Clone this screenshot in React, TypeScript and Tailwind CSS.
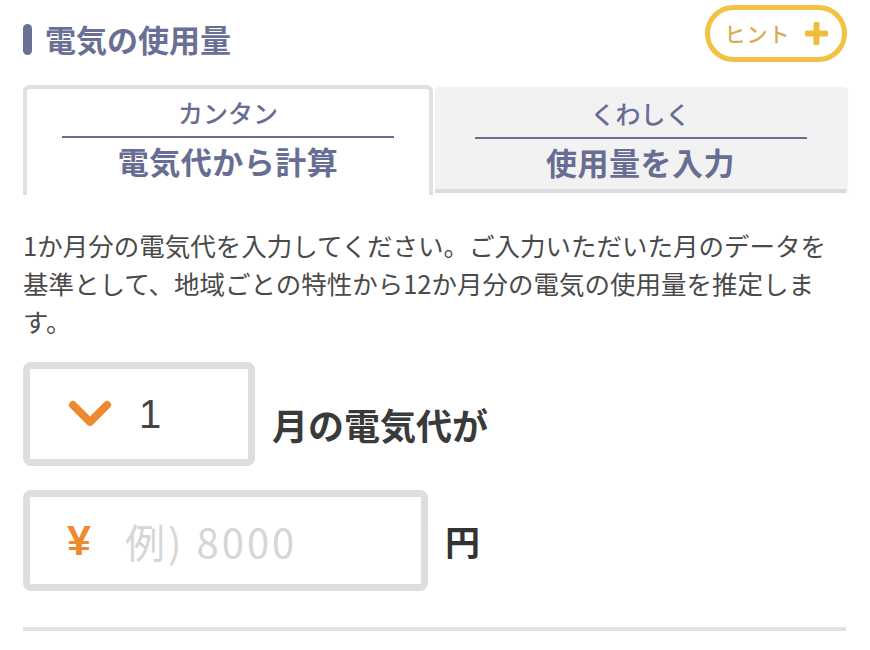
import { useState } from "react";

const jp = { fontFamily: "'Noto Sans CJK JP', 'Noto Sans', sans-serif" };

function Tab({
  label,
  title,
  active,
  onClick,
}: {
  label: string;
  title: string;
  active: boolean;
  onClick: () => void;
}) {
  return (
    <button
      onClick={onClick}
      className={
        active
          ? "w-[410px] shrink-0 h-[110px] bg-white border-[4px] border-b-0 border-[#e0e0e0] rounded-t-[6px] pt-[6px] flex flex-col items-center"
          : "flex-1 mt-[2px] h-[106px] bg-[#f2f2f2] border-b-[4px] border-[#dcdcdc] rounded-t-[4px] pt-[9px] flex flex-col items-center shadow-[2px_0_2px_rgba(0,0,0,0.06)]"
      }
    >
      <span className="text-[25px] leading-[34px] font-medium text-[#676d93]">
        {label}
      </span>
      <span className="mt-[7px] block h-[2px] w-[332px] bg-[#676d93]" />
      <span className="mt-[3px] text-[31px] leading-[40px] font-bold text-[#676d93] tracking-[0.5px]">
        {title}
      </span>
    </button>
  );
}

export default function App() {
  const [tab, setTab] = useState(0);

  return (
    <main className="w-[870px] h-[650px] bg-white pl-[23px] pr-[24px] overflow-hidden" style={jp}>
      {/* Header */}
      <div className="flex justify-between items-start pt-[5px]">
        <div className="mt-[14px] h-[40px] flex items-center gap-[13px]">
          <span className="block w-[9px] h-[31px] rounded-full bg-[#6a6f95]" />
          <h2 className="text-[31px] leading-[40px] font-bold text-[#6a6f95]">電気の使用量</h2>
        </div>
        <button className="w-[142px] h-[57px] rounded-full border-[5px] border-[#f1c244] flex items-center justify-center gap-[14px] mr-[-1px]">
          <span className="text-[21px] leading-none font-medium text-[#d8ad4f] tracking-[1px]">ヒント</span>
          <svg width="23" height="23" viewBox="0 0 23 23">
            <rect x="8.5" y="0" width="6" height="23" rx="1.5" fill="#efbd38" />
            <rect x="0" y="8.5" width="23" height="6" rx="1.5" fill="#efbd38" />
          </svg>
        </button>
      </div>

      {/* Tabs */}
      <div className="mt-[23px] flex gap-[2px]">
        <Tab label="カンタン" title="電気代から計算" active={tab === 0} onClick={() => setTab(0)} />
        <Tab label="くわしく" title="使用量を入力" active={tab === 1} onClick={() => setTab(1)} />
      </div>

      {/* Description */}
      <p className="mt-[31px] text-[25.5px] leading-[38px] text-[#4a4a4a]">
        1か月分の電気代を入力してください。ご入力いただいた月のデータを基準として、地域ごとの特性から12か月分の電気の使用量を推定します。
      </p>

      {/* Month select */}
      <div className="mt-[22px] flex items-end gap-[17px]">
        <div className="w-[232px] h-[104px] border-[7px] border-[#dedede] rounded-[8px] flex items-center pl-[38px] gap-[27px]">
          <svg width="44" height="28" viewBox="0 0 44 28">
            <path d="M5 5 L22 22 L39 5" fill="none" stroke="#ee8a2e" strokeWidth="8" strokeLinecap="round" strokeLinejoin="round" />
          </svg>
          <span className="text-[40px] leading-none font-medium text-[#444]" style={{ fontFamily: "'Liberation Sans', sans-serif" }}>1</span>
        </div>
        <span className="pb-[20px] text-[36px] leading-[44px] font-bold text-[#3a3a3a]">月の電気代が</span>
      </div>

      {/* Amount input */}
      <div className="mt-[24px] flex items-center gap-[17px]">
        <div className="w-[405px] h-[101px] border-[7px] border-[#dedede] rounded-[8px] flex items-center pl-[37px]">
          <span className="text-[43px] leading-none font-bold text-[#ee8a2e] w-[27px]" style={{ fontFamily: "'Liberation Sans', sans-serif" }}>¥</span>
          <input
            type="text"
            placeholder="例) 8000"
            className="ml-[31px] w-[250px] bg-transparent outline-none text-[40px] tracking-[3px] text-[#444] placeholder:text-[#d6d6d6]"
          />
        </div>
        <span className="text-[35px] leading-[44px] font-bold text-[#333]">円</span>
      </div>

      <div className="mt-[36px] h-[4px] bg-[#e2e2e2]" />
    </main>
  );
}
